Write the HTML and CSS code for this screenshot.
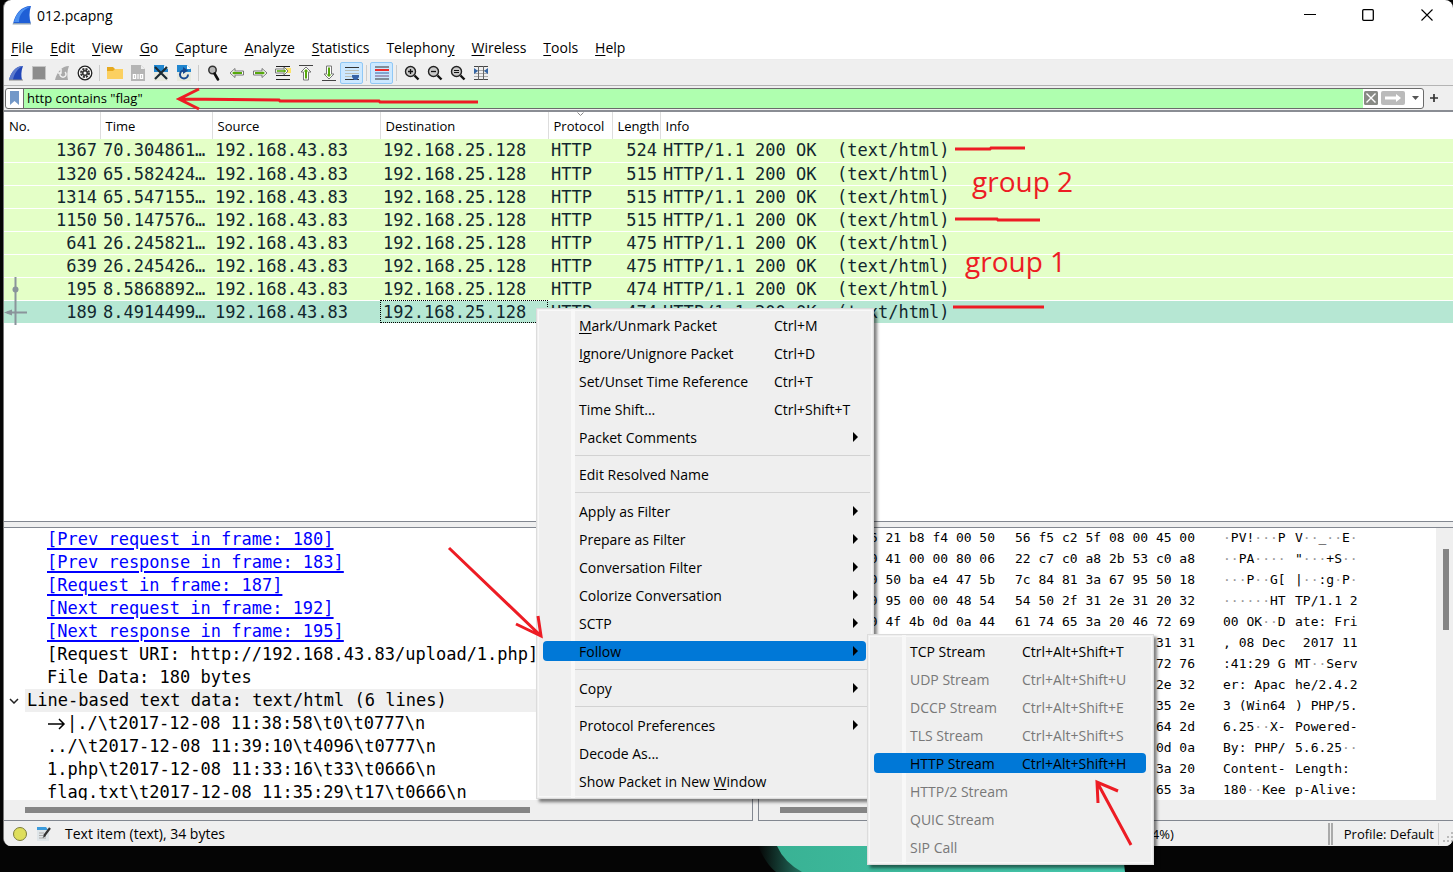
FILE: index.html
```html
<!DOCTYPE html>
<html lang="en">
<head>
    <meta charset="UTF-8">
    <title>012.pcapng</title>
    <link rel="stylesheet" href="styles.css">
</head>
<body>
    <svg class="wallpaper" width="400" height="26" viewBox="0 0 400 26" aria-hidden="true">
        <defs>
            <linearGradient id="teal" x1="0" x2="1" y1="0" y2="0">
                <stop offset="0" stop-color="#39b294"/>
                <stop offset="1" stop-color="#47c9ae"/>
            </linearGradient>
            <linearGradient id="edge" x1="0" x2="1" y1="0" y2="0">
                <stop offset="0" stop-color="#050505"/>
                <stop offset="1" stop-color="#2a8a75"/>
            </linearGradient>
        </defs>
        <path d="M6 0 Q14 18 24 26 H60 L28 0Z" fill="url(#edge)"/>
        <path d="M25 0 Q32 16 50 26 H373 L370 0Z" fill="url(#teal)"/>
    </svg>

    <div class="window">
        <header class="titlebar">
            <svg class="app-icon" width="20" height="20" viewBox="0 0 20 20" aria-hidden="true">
                <path d="M1 19 C3 9 9 1 19 1 C17 7 17 13 19 19Z" fill="#1f5fd6"/>
                <path d="M2 17 C4 9 9 2 18 2 C10 5 7 11 7 17Z" fill="#4b8ff0"/>
                <path d="M1 18h18v1.500H.5z" fill="#8fa3b8"/>
            </svg>
            <h1>012.pcapng</h1>
            <div class="window-buttons">
                <button aria-label="Minimize"><svg width="12" height="12" viewBox="0 0 12 12"><path d="M0 5.500h12" stroke="#000"/></svg></button>
                <button aria-label="Maximize"><svg width="12" height="12" viewBox="0 0 12 12"><rect x=".7" y=".7" width="10.600" height="10.600" rx="1" fill="none" stroke="#000" stroke-width="1.300"/></svg></button>
                <button aria-label="Close"><svg width="12" height="12" viewBox="0 0 12 12"><path d="M.5.5l11 11M11.500.5l-11 11" stroke="#000" stroke-width="1.100"/></svg></button>
            </div>
        </header>

        <nav class="menubar">
            <button><u>F</u>ile</button>
            <button><u>E</u>dit</button>
            <button><u>V</u>iew</button>
            <button><u>G</u>o</button>
            <button><u>C</u>apture</button>
            <button><u>A</u>nalyze</button>
            <button><u>S</u>tatistics</button>
            <button>Telephon<u>y</u></button>
            <button><u>W</u>ireless</button>
            <button><u>T</u>ools</button>
            <button><u>H</u>elp</button>
        </nav>

        <div class="toolbar">
            <button aria-label="Start capture"><svg width="16" height="16" viewBox="0 0 16 16"><path d="M1 15C3 7 8 1 15 1C13 6 13 11 14 15Z" fill="#2146b8"/><path d="M1 15C3 7 8 1 15 1C9 4 6 9 5 15Z" fill="#5b79cc"/><path d="M1 15h14" stroke="#888"/></svg></button>
            <button aria-label="Stop capture"><svg width="16" height="16" viewBox="0 0 16 16"><rect x="1.500" y="1.500" width="13" height="13" fill="#8c8c8c" stroke="#c4c4c4"/></svg></button>
            <button aria-label="Restart capture"><svg width="16" height="16" viewBox="0 0 16 16"><path d="M1 15C3 7 8 1 15 1C13 6 13 11 14 15Z" fill="#aaa"/><path d="M11 7a3 3 0 1 1-4 0M7 4v4h-3" fill="none" stroke="#f2f2f2" stroke-width="1.500"/></svg></button>
            <button aria-label="Capture options"><svg width="16" height="16" viewBox="0 0 16 16"><circle cx="8" cy="8" r="6.800" fill="#fff" stroke="#222" stroke-width="1.300"/><circle cx="8" cy="8" r="3.800" fill="none" stroke="#333" stroke-width="2.400" stroke-dasharray="2 .98"/><circle cx="8" cy="8" r="3" fill="#333"/><circle cx="8" cy="8" r="1.500" fill="#fff"/></svg></button>
            <span class="divider"></span>
            <button aria-label="Open file"><svg width="16" height="16" viewBox="0 0 16 16"><path d="M0 2h6l2 2h7v10H0z" fill="#e6a91f"/><path d="M0 6h6l2-2h8v10H0z" fill="#fbd061"/></svg></button>
            <button aria-label="Save file"><svg width="16" height="16" viewBox="0 0 16 16"><path d="M1 0h10l4 4v12H1z" fill="#b5b5b5"/><path d="M11 0v4h4z" fill="#eee"/><path d="M2 9h12v5H2z" fill="#c8c8c8"/><g fill="none" stroke="#fff"><rect x="3.500" y="9.500" width="2" height="4"/><path d="M8 9v5"/><rect x="10.500" y="9.500" width="2" height="4"/></g></svg></button>
            <button aria-label="Close file"><svg width="16" height="16" viewBox="0 0 16 16"><path d="M1 0h10l4 4v12H1z" fill="#e7e9df"/><path d="M1 0h10l4 4v3H1z" fill="#2186cf"/><path d="M11 0v4h4z" fill="#fff"/><path d="M2 2l12 12M14 2L2 14" stroke="#1c2b33" stroke-width="2.200"/></svg></button>
            <button aria-label="Reload file"><svg width="16" height="16" viewBox="0 0 16 16"><path d="M1 0h10l4 4v12H1z" fill="#e7e9df"/><path d="M1 0h10l4 4v3H1z" fill="#2186cf"/><path d="M11 0v4h4z" fill="#fff"/><path d="M12 9.500A4 4 0 1 1 8 5.500" fill="none" stroke="#17498f" stroke-width="2"/><path d="M7 2l5 3.500-5 3.500z" fill="#17498f"/></svg></button>
            <span class="divider"></span>
            <button aria-label="Find packet"><svg width="16" height="16" viewBox="0 0 16 16"><circle cx="6.500" cy="5" r="3.700" fill="#b8b8b8" stroke="#333" stroke-width="1.500"/><path d="M8.500 8.500l3.500 6" stroke="#111" stroke-width="2.600" stroke-linecap="round"/></svg></button>
            <button aria-label="Previous packet"><svg width="16" height="16" viewBox="0 0 16 16"><path d="M1 8l5-4.500v2.500h8.500v4H6v2.500z" fill="#fff" stroke="#777"/><path d="M3 8l2.500-2v1H13v2H5.500v1z" fill="#56a80c"/></svg></button>
            <button aria-label="Next packet"><svg width="16" height="16" viewBox="0 0 16 16"><path d="M15 8l-5-4.500v2.500H1.500v4H10v2.500z" fill="#fff" stroke="#777"/><path d="M13 8l-2.500-2v1H3v2h7.500v1z" fill="#56a80c"/></svg></button>
            <button aria-label="Go to packet"><svg width="16" height="16" viewBox="0 0 16 16"><path d="M1 1.500h14M1 10.500h14M1 14.500h14" stroke="#222"/><path d="M11 3h5v5h-5z" fill="#fbe36a"/><path d="M13 6L9 2v2H.5v4H9v2z" fill="#fff" stroke="#777"/><path d="M11 6L9 4.500V5.500H2v1h7v1z" fill="#56a80c" stroke="#56a80c" stroke-width=".6"/></svg></button>
            <button aria-label="First packet"><svg width="16" height="16" viewBox="0 0 16 16"><path d="M1 .5h14" stroke="#444"/><path d="M8 2l5 5h-2.500v8h-5V7H3z" fill="#fff" stroke="#777"/><path d="M8 4l2.500 2.500H9V13.500H7V6.500H5.500z" fill="#56a80c"/></svg></button>
            <button aria-label="Last packet"><svg width="16" height="16" viewBox="0 0 16 16"><path d="M1 15.500h14" stroke="#444"/><path d="M8 14L3 9h2.500V1h5v8H13z" fill="#fff" stroke="#777"/><path d="M8 12L5.500 9.500H7V2.500h2v7h1.500z" fill="#56a80c"/></svg></button>
            <button class="pressed" aria-label="Auto scroll" aria-pressed="true"><svg width="16" height="16" viewBox="0 0 16 16"><path d="M1 2.500h14M1 14.500h14" stroke="#333"/><path d="M1 5.500h14M1 8.500h14M1 11.500h14" stroke="#b9bdb5"/><path d="M8 10h7v2l-2 3h-3l-2-3z" fill="#3563a8"/></svg></button>
            <span class="divider"></span>
            <button class="pressed" aria-label="Colorize" aria-pressed="true"><svg width="16" height="16" viewBox="0 0 16 16"><path d="M1 2h14" stroke="#333"/><path d="M1 5h14" stroke="#ef2929" stroke-width="2"/><path d="M1 8h14" stroke="#3465a4"/><path d="M1 11h14" stroke="#75507b"/><path d="M1 14h14" stroke="#333"/></svg></button>
            <span class="divider"></span>
            <button aria-label="Zoom in"><svg width="16" height="16" viewBox="0 0 16 16"><circle cx="6.500" cy="6.500" r="5" fill="#c9c9c9" stroke="#222" stroke-width="1.400"/><path d="M10.500 10.500l4 4" stroke="#111" stroke-width="2.400"/><path d="M4 6.500h5M6.500 4v5" stroke="#111" stroke-width="1.300"/></svg></button>
            <button aria-label="Zoom out"><svg width="16" height="16" viewBox="0 0 16 16"><circle cx="6.500" cy="6.500" r="5" fill="#c9c9c9" stroke="#222" stroke-width="1.400"/><path d="M10.500 10.500l4 4" stroke="#111" stroke-width="2.400"/><path d="M4 6.500h5" stroke="#111" stroke-width="1.300"/></svg></button>
            <button aria-label="Normal size"><svg width="16" height="16" viewBox="0 0 16 16"><circle cx="6.500" cy="6.500" r="5" fill="#c9c9c9" stroke="#222" stroke-width="1.400"/><path d="M10.500 10.500l4 4" stroke="#111" stroke-width="2.400"/><path d="M4 5.500h5M4 7.500h5" stroke="#111"/></svg></button>
            <button aria-label="Resize columns"><svg width="16" height="16" viewBox="0 0 16 16"><path d="M1 1.500h14M1 14.500h14" stroke="#444"/><path d="M1 5.500h14M1 8.500h14M1 11.500h14" stroke="#aaa"/><path d="M5.500 1v14M10.500 1v14" stroke="#666"/><path d="M1 3l4 3-4 3zM15 3l-4 3 4 3z" fill="#3465a4"/></svg></button>
        </div>

        <form class="filterbar">
            <div class="filter-box">
                <button type="button" class="bookmark" aria-label="Filter bookmarks"><svg width="9" height="14" viewBox="0 0 9 14"><path d="M0 0h9v14L4.500 10 0 14z" fill="#7398c8"/></svg></button>
                <input type="text" aria-label="Display filter" value='http contains "flag"'>
                <button type="button" aria-label="Clear filter"><svg width="14" height="14" viewBox="0 0 14 14"><rect width="14" height="14" rx="1.500" fill="#888a85"/><path d="M2.500 2.500l9 9M11.500 2.500l-9 9" stroke="#fff" stroke-width="1.400"/></svg></button>
                <button type="button" aria-label="Apply filter"><svg width="24" height="14" viewBox="0 0 24 14"><rect width="24" height="14" rx="2" fill="#bbb"/><path d="M4 5.500h11V3l5 4-5 4V8.500H4z" fill="#fff"/></svg></button>
                <button type="button" class="history" aria-label="Recent filters"><svg width="7" height="4" viewBox="0 0 7 4"><path d="M0 0h7L3.500 4z" fill="#555"/></svg></button>
            </div>
            <button type="button" class="add-filter" aria-label="Add filter button"><svg width="8" height="8" viewBox="0 0 8 8"><path d="M4 0v8M0 4h8" stroke="#333" stroke-width="1.700"/></svg></button>
        </form>

        <main class="panes">
            <section class="packet-list">
                <table>
                    <colgroup>
                        <col class="col-no"><col class="col-time"><col class="col-address"><col class="col-address"><col class="col-protocol"><col class="col-length"><col>
                    </colgroup>
                    <thead>
                        <tr><th>No.</th><th>Time</th><th>Source</th><th>Destination</th><th class="sorted">Protocol<svg class="sort-mark" width="7" height="4" viewBox="0 0 7 4"><path d="M.5.5l3 3 3-3" fill="none" stroke="#888"/></svg></th><th>Length</th><th>Info</th></tr>
                    </thead>
                    <tbody>
                        <tr><td class="num">1367</td><td>70.304861…</td><td>192.168.43.83</td><td>192.168.25.128</td><td>HTTP</td><td class="num">524</td><td>HTTP/1.1 200 OK  (text/html)</td></tr>
                        <tr><td class="num">1320</td><td>65.582424…</td><td>192.168.43.83</td><td>192.168.25.128</td><td>HTTP</td><td class="num">515</td><td>HTTP/1.1 200 OK  (text/html)</td></tr>
                        <tr><td class="num">1314</td><td>65.547155…</td><td>192.168.43.83</td><td>192.168.25.128</td><td>HTTP</td><td class="num">515</td><td>HTTP/1.1 200 OK  (text/html)</td></tr>
                        <tr><td class="num">1150</td><td>50.147576…</td><td>192.168.43.83</td><td>192.168.25.128</td><td>HTTP</td><td class="num">515</td><td>HTTP/1.1 200 OK  (text/html)</td></tr>
                        <tr><td class="num">641</td><td>26.245821…</td><td>192.168.43.83</td><td>192.168.25.128</td><td>HTTP</td><td class="num">475</td><td>HTTP/1.1 200 OK  (text/html)</td></tr>
                        <tr><td class="num">639</td><td>26.245426…</td><td>192.168.43.83</td><td>192.168.25.128</td><td>HTTP</td><td class="num">475</td><td>HTTP/1.1 200 OK  (text/html)</td></tr>
                        <tr><td class="num">195</td><td>8.5868892…</td><td>192.168.43.83</td><td>192.168.25.128</td><td>HTTP</td><td class="num">474</td><td>HTTP/1.1 200 OK  (text/html)</td></tr>
                        <tr class="selected"><td class="num">189</td><td>8.4914499…</td><td>192.168.43.83</td><td class="focus">192.168.25.128</td><td>HTTP</td><td class="num">474</td><td>HTTP/1.1 200 OK  (text/html)</td></tr>
                    </tbody>
                </table>
                <svg class="related" width="24" height="50" viewBox="0 0 24 50" aria-hidden="true">
                    <path d="M11.500 0v48M3 35.500h20" stroke="#8a949b" stroke-width="2"/>
                    <circle cx="11.500" cy="12.500" r="3" fill="#8a949b"/>
                    <path d="M0 35.500l8-3v6z" fill="#8a949b"/>
                </svg>
            </section>

            <div class="lower">
                <section class="details">
                    <ul>
                        <li><a href="#">[Prev request in frame: 180]</a></li>
                        <li><a href="#">[Prev response in frame: 183]</a></li>
                        <li><a href="#">[Request in frame: 187]</a></li>
                        <li><a href="#">[Next request in frame: 192]</a></li>
                        <li><a href="#">[Next response in frame: 195]</a></li>
                        <li>[Request URI: http://192.168.43.83/upload/1.php]</li>
                        <li>File Data: 180 bytes</li>
                        <li class="branch"><svg width="10" height="6" viewBox="0 0 10 6" aria-hidden="true"><path d="M1 1l4 4 4-4" fill="none" stroke="#222" stroke-width="1.500"/></svg><span>Line-based text data: text/html (6 lines)</span></li>
                        <li><svg class="tab-mark" width="20" height="18" viewBox="0 0 20 18" aria-hidden="true"><path d="M1 9h16M12 4l5 5-5 5" fill="none" stroke="#000" stroke-width="1.500"/></svg>|./\t2017-12-08 11:38:58\t0\t0777\n</li>
                        <li>../\t2017-12-08 11:39:10\t4096\t0777\n</li>
                        <li>1.php\t2017-12-08 11:33:16\t33\t0666\n</li>
                        <li>flag.txt\t2017-12-08 11:35:29\t17\t0666\n</li>
                    </ul>
                    <div class="hscroll"><span></span></div>
                </section>

                <section class="bytes">
                    <div class="bytes-view">
                        <table>
                            <tr><td class="offset">0000</td><td>00 50 56 21 b8 f4 00 50</td><td>56 f5 c2 5f 08 00 45 00</td><td class="ascii"><i>·</i>PV!<i>···</i>P</td><td class="ascii">V<i>··</i>_<i>··</i>E<i>·</i></td></tr>
                            <tr><td class="offset">0010</td><td>00 dc 50 41 00 00 80 06</td><td>22 c7 c0 a8 2b 53 c0 a8</td><td class="ascii"><i>··</i>PA<i>····</i></td><td class="ascii">"<i>···</i>+S<i>··</i></td></tr>
                            <tr><td class="offset">0020</td><td>19 80 00 50 ba e4 47 5b</td><td>7c 84 81 3a 67 95 50 18</td><td class="ascii"><i>···</i>P<i>··</i>G[</td><td class="ascii">|<i>··</i>:g<i>·</i>P<i>·</i></td></tr>
                            <tr><td class="offset">0030</td><td>01 00 f0 95 00 00 48 54</td><td>54 50 2f 31 2e 31 20 32</td><td class="ascii"><i>······</i>HT</td><td class="ascii">TP/1.1 2</td></tr>
                            <tr><td class="offset">0040</td><td>30 30 20 4f 4b 0d 0a 44</td><td>61 74 65 3a 20 46 72 69</td><td class="ascii">00 OK<i>··</i>D</td><td class="ascii">ate: Fri</td></tr>
                            <tr><td class="offset">0050</td><td>2c 20 30 38 20 44 65 63</td><td>20 32 30 31 37 20 31 31</td><td class="ascii">, 08 Dec</td><td class="ascii"> 2017 11</td></tr>
                            <tr><td class="offset">0060</td><td>3a 34 31 3a 32 39 20 47</td><td>4d 54 0d 0a 53 65 72 76</td><td class="ascii">:41:29 G</td><td class="ascii">MT<i>··</i>Serv</td></tr>
                            <tr><td class="offset">0070</td><td>65 72 3a 20 41 70 61 63</td><td>68 65 2f 32 2e 34 2e 32</td><td class="ascii">er: Apac</td><td class="ascii">he/2.4.2</td></tr>
                            <tr><td class="offset">0080</td><td>33 20 28 57 69 6e 36 34</td><td>29 20 50 48 50 2f 35 2e</td><td class="ascii">3 (Win64</td><td class="ascii">) PHP/5.</td></tr>
                            <tr><td class="offset">0090</td><td>36 2e 32 35 0d 0a 58 2d</td><td>50 6f 77 65 72 65 64 2d</td><td class="ascii">6.25<i>··</i>X-</td><td class="ascii">Powered-</td></tr>
                            <tr><td class="offset">00a0</td><td>42 79 3a 20 50 48 50 2f</td><td>35 2e 36 2e 32 35 0d 0a</td><td class="ascii">By: PHP/</td><td class="ascii">5.6.25<i>··</i></td></tr>
                            <tr><td class="offset">00b0</td><td>43 6f 6e 74 65 6e 74 2d</td><td>4c 65 6e 67 74 68 3a 20</td><td class="ascii">Content-</td><td class="ascii">Length: </td></tr>
                            <tr><td class="offset">00c0</td><td>31 38 30 0d 0a 4b 65 65</td><td>70 2d 41 6c 69 76 65 3a</td><td class="ascii">180<i>··</i>Kee</td><td class="ascii">p-Alive:</td></tr>
                        </table>
                        <div class="vscroll"><span></span></div>
                    </div>
                    <div class="hscroll"><span></span></div>
                </section>
            </div>
        </main>

        <footer class="statusbar">
            <button class="expert" aria-label="Expert information"></button>
            <button aria-label="Capture comment"><svg width="14" height="14" viewBox="0 0 14 14"><path d="M0 0h9l3 3v11H0z" fill="#dfe5e8"/><path d="M0 0h9l2 3H0z" fill="#3b9bdc"/><path d="M2 6h5M2 8.500h4M2 11h7" stroke="#aaa"/><path d="M13 1L7 9" stroke="#333" stroke-width="2.200"/><path d="M7.500 7.500L5.500 11l3.500-2z" fill="#333"/></svg></button>
            <span class="status-text">Text item (text), 34 bytes</span>
            <span class="status-count">Displayed: 8 (0.4%)</span>
            <span class="status-profile">Profile: Default</span>
            <svg class="grip" width="10" height="10" viewBox="0 0 10 10" aria-hidden="true"><path d="M8 0h2v2H8zM4 4h2v2H4zM8 4h2v2H8zM0 8h2v2H0zM4 8h2v2H4zM8 8h2v2H8z" fill="#bbb"/></svg>
        </footer>
    </div>

    <div class="menu context-menu">
        <button><span><u>M</u>ark/Unmark Packet</span><kbd>Ctrl+M</kbd></button>
        <button><span><u>I</u>gnore/Unignore Packet</span><kbd>Ctrl+D</kbd></button>
        <button><span>Set/Unset Time Reference</span><kbd>Ctrl+T</kbd></button>
        <button><span>Time Shift...</span><kbd>Ctrl+Shift+T</kbd></button>
        <button class="has-sub">Packet Comments</button>
        <hr>
        <button>Edit Resolved Name</button>
        <hr>
        <button class="has-sub">Apply as Filter</button>
        <button class="has-sub">Prepare as Filter</button>
        <button class="has-sub">Conversation Filter</button>
        <button class="has-sub">Colorize Conversation</button>
        <button class="has-sub">SCTP</button>
        <button class="has-sub active">Follow</button>
        <hr>
        <button class="has-sub">Copy</button>
        <hr>
        <button class="has-sub">Protocol Preferences</button>
        <button>Decode As...</button>
        <button><span>Show Packet in New <u>W</u>indow</span></button>
    </div>

    <div class="menu follow-menu">
        <button><span>TCP Stream</span><kbd>Ctrl+Alt+Shift+T</kbd></button>
        <button disabled><span>UDP Stream</span><kbd>Ctrl+Alt+Shift+U</kbd></button>
        <button disabled><span>DCCP Stream</span><kbd>Ctrl+Alt+Shift+E</kbd></button>
        <button disabled><span>TLS Stream</span><kbd>Ctrl+Alt+Shift+S</kbd></button>
        <button class="active"><span>HTTP Stream</span><kbd>Ctrl+Alt+Shift+H</kbd></button>
        <button disabled>HTTP/2 Stream</button>
        <button disabled>QUIC Stream</button>
        <button disabled>SIP Call</button>
    </div>

    <!-- hand-drawn notes -->
    <svg class="notes" width="1453" height="872" viewBox="0 0 1453 872">
        <g fill="none" stroke="#ed1c24" stroke-width="3">
            <path d="M478 102L380 102 379 101 280 101 279 100 180 99M199 89L179 99 199 109"/>
            <path d="M955 149H990L991 148H1025"/>
            <path d="M955 219H997L998 220H1040"/>
            <path d="M953 307H1044"/>
            <path d="M449 548L541 636M516 624L541 636 538 616"/>
            <path d="M1131 845L1097 782M1118 791L1097 782 1098 803"/>
        </g>
        <text x="972" y="192">group 2</text>
        <text x="965" y="272">group 1</text>
    </svg>
</body>
</html>
```
FILE: styles.css
```css
* {
    box-sizing: border-box;
}

body {
    margin: 0;
    padding: 0 0 26px 3px;
    height: 100vh;
    overflow: hidden;
    background-color: #050505;
    color: #000;
    font-family: "Open Sans", "Noto Sans", sans-serif;
    font-size: 14px;
}

button {
    display: flex;
    align-items: center;
    justify-content: center;
    padding: 0;
    border: none;
    background: none;
    color: inherit;
    font: inherit;
}

u {
    text-underline-offset: 2px;
}

.wallpaper {
    position: absolute;
    left: 752px;
    bottom: 0;
}

.window {
    position: relative;
    display: flex;
    flex-direction: column;
    height: 100%;
    overflow: hidden;
    background-color: #fff;
    border-left: 1px solid #777;
    border-radius: 8px;
}

.titlebar {
    display: flex;
    align-items: center;
    height: 30px;
    padding-left: 8px;
}

.titlebar h1 {
    margin: 0 auto 0 5px;
    font-size: 14px;
    font-weight: normal;
}

.window-buttons {
    display: flex;
}

.window-buttons button {
    width: 58px;
    height: 30px;
}

.window-buttons button:last-child {
    width: 56px;
    padding-left: 4px;
}

.menubar {
    display: flex;
    gap: 17px;
    height: 30px;
    padding: 5px 7px 0;
    border-bottom: 1px solid #ececec;
}

.toolbar {
    display: flex;
    align-items: center;
    height: 26px;
    background-color: #efefef;
    border-bottom: 1px solid #b4b4b4;
}

.toolbar button {
    width: 23px;
    height: 22px;
}

.toolbar .pressed {
    background-color: #cce8ff;
    border: 1px solid #90c8f6;
    border-radius: 2px;
}

.divider {
    width: 1px;
    height: 16px;
    margin: 0 3px;
    background-color: #ccc;
}

.filterbar {
    display: flex;
    align-items: center;
    height: 26px;
    padding-left: 1px;
    background-color: #efefef;
    border-bottom: 2px solid #8a8d94;
}

.filter-box {
    display: flex;
    flex: 1;
    align-items: center;
    gap: 3px;
    height: 21px;
    background-color: #fff;
    border: 1px solid #6b6b6b;
    border-radius: 3px;
}

.filter-box input {
    flex: 1;
    height: 19px;
    margin: 0 -2px 0 -3px;
    padding: 0 3px;
    border: none;
    border-left: 1px solid #6b6b6b;
    background-color: #afffaf;
    font: inherit;
    font-size: 13px;
}

.bookmark {
    width: 17px;
}

.history {
    width: 15px;
}

.add-filter {
    width: 20px;
    margin-right: 9px;
}

.panes {
    display: flex;
    flex: 1;
    flex-direction: column;
    gap: 5px;
    min-height: 0;
    background-color: #efefef;
}

.packet-list {
    position: relative;
    flex: 1;
    background-color: #fff;
    border-bottom: 1px solid #828790;
}

.packet-list table {
    width: 100%;
    table-layout: fixed;
    border-collapse: collapse;
}

.col-no {
    width: 96px;
}

.col-time {
    width: 112px;
}

.col-address {
    width: 168px;
}

.col-protocol {
    width: 64px;
}

.col-length {
    width: 48px;
}

.packet-list th {
    height: 27px;
    padding: 0 0 0 5px;
    overflow: hidden;
    border-right: 1px solid #ddd;
    font-weight: normal;
    font-size: 13px;
    text-align: left;
    white-space: nowrap;
}

.packet-list th:last-child {
    border-right: none;
}

.sorted {
    position: relative;
}

.sort-mark {
    position: absolute;
    top: 0;
    left: 28px;
}

.packet-list td {
    height: 23px;
    padding: 0 3px;
    overflow: hidden;
    background-color: #e4ffc7;
    border-bottom: 1px solid #fff;
    color: #12272e;
    font: 17px/22px "DejaVu Sans Mono", monospace;
    white-space: pre;
}

.packet-list .num {
    text-align: right;
}

.packet-list .selected td {
    background-color: #b6e7d3;
}

.packet-list .focus {
    outline: 1px dotted #000;
    outline-offset: -1px;
}

.related {
    position: absolute;
    top: 165px;
    left: 0;
}

.lower {
    display: flex;
    flex: 0 0 294px;
    gap: 5px;
    min-height: 0;
}

.details,
.bytes {
    display: flex;
    flex-direction: column;
    border: 1px solid #828790;
    border-left: none;
}

.details {
    width: 749px;
}

.details ul {
    flex: 1;
    min-height: 0;
    margin: 0;
    padding: 0;
    overflow: hidden;
    background-color: #fff;
    list-style: none;
    font: 17px/23px "DejaVu Sans Mono", monospace;
}

.details li {
    display: flex;
    align-items: center;
    height: 23px;
    padding-left: 43px;
    white-space: pre;
}

.details a {
    color: #0000ff;
    text-decoration-thickness: 2px;
    text-underline-offset: 3px;
}

.details .branch {
    gap: 6px;
    padding-left: 5px;
}

.branch span {
    flex: 1;
    padding-left: 2px;
    background-color: #efefef;
}

.hscroll {
    display: flex;
    align-items: center;
    height: 20px;
    padding: 0 21px;
}

.hscroll span {
    width: 505px;
    height: 6px;
    background-color: #858585;
}

.bytes .hscroll span {
    width: 350px;
}

.bytes {
    flex: 1;
    border-left: 1px solid #828790;
    border-right: none;
}

.bytes-view {
    display: flex;
    flex: 1;
    justify-content: space-between;
    min-height: 0;
    overflow: hidden;
    background-color: #fff;
}

.bytes table {
    align-self: flex-start;
    margin-left: 8px;
    border-collapse: collapse;
    font: 13px/20px "DejaVu Sans Mono", monospace;
}

.bytes td {
    width: 200px;
    height: 21px;
    padding: 0;
    vertical-align: top;
    white-space: pre;
}

.bytes .offset {
    width: 48px;
}

.bytes .ascii {
    width: 72px;
}

.bytes td:nth-child(3) {
    width: 208px;
}

.bytes i {
    color: #999;
    font-style: normal;
}

.vscroll {
    width: 17px;
    padding: 21px 4px 0 7px;
    background-color: #efefef;
}

.vscroll span {
    display: block;
    height: 81px;
    background-color: #858585;
}

.statusbar {
    display: flex;
    align-items: center;
    gap: 10px;
    height: 25px;
    padding: 0 0 0 9px;
    background-color: #efefef;
    font-size: 13px;
}

.statusbar .expert {
    width: 14px;
    height: 14px;
    background-color: #dede5c;
    border: 1px solid #7b7b3a;
    border-radius: 50%;
}

.status-text {
    flex: 1;
    padding-left: 4px;
    font-size: 14px;
}

.status-count {
    margin-right: 144px;
}

.status-profile {
    padding: 2px 4px 2px 11px;
    border-left: 5px double #aaa;
    border-right: 1px solid #ccc;
}

.grip {
    align-self: flex-end;
    margin: 0 0 4px -6px;
}

.menu {
    position: absolute;
    display: flex;
    flex-direction: column;
    padding: 2px 3px 3px;
    background: linear-gradient(to right, #efefef 34px, #f8f8f8 34px, #f8f8f8 38px, #efefef 38px);
    border: 1px solid #dcdcdc;
    outline: 1px solid #f8f8f8;
    outline-offset: -3px;
    box-shadow: 3px 3px 3px rgba(0, 0, 0, 0.5);
}

.context-menu {
    top: 308px;
    left: 536px;
    width: 338px;
}

.follow-menu {
    top: 634px;
    left: 867px;
    width: 287px;
}

.menu button {
    justify-content: flex-start;
    height: 20px;
    margin: 4px 0;
    padding-left: 39px;
    text-align: left;
    white-space: nowrap;
}

.menu span {
    width: 195px;
}

.follow-menu span {
    width: 112px;
}

.menu kbd {
    font: inherit;
}

.menu button:disabled {
    color: #787878;
}

.menu .active {
    margin-right: 4px;
    margin-left: 3px;
    padding-left: 36px;
    background-color: #0078d7;
    border-radius: 4px;
}

.has-sub::after {
    content: "";
    margin-right: 12px;
    margin-left: auto;
    border: 5px solid transparent;
    border-right: none;
    border-left: 5px solid #000;
}

.has-sub.active::after {
    margin-right: 8px;
}

.menu hr {
    width: 295px;
    height: 1px;
    margin: 4px 0 4px 35px;
    border: none;
    background-color: #d2d2d2;
}

.notes {
    position: absolute;
    top: 0;
    left: 0;
    pointer-events: none;
}

.notes text {
    fill: #ed1c24;
    font-size: 28px;
}
```
